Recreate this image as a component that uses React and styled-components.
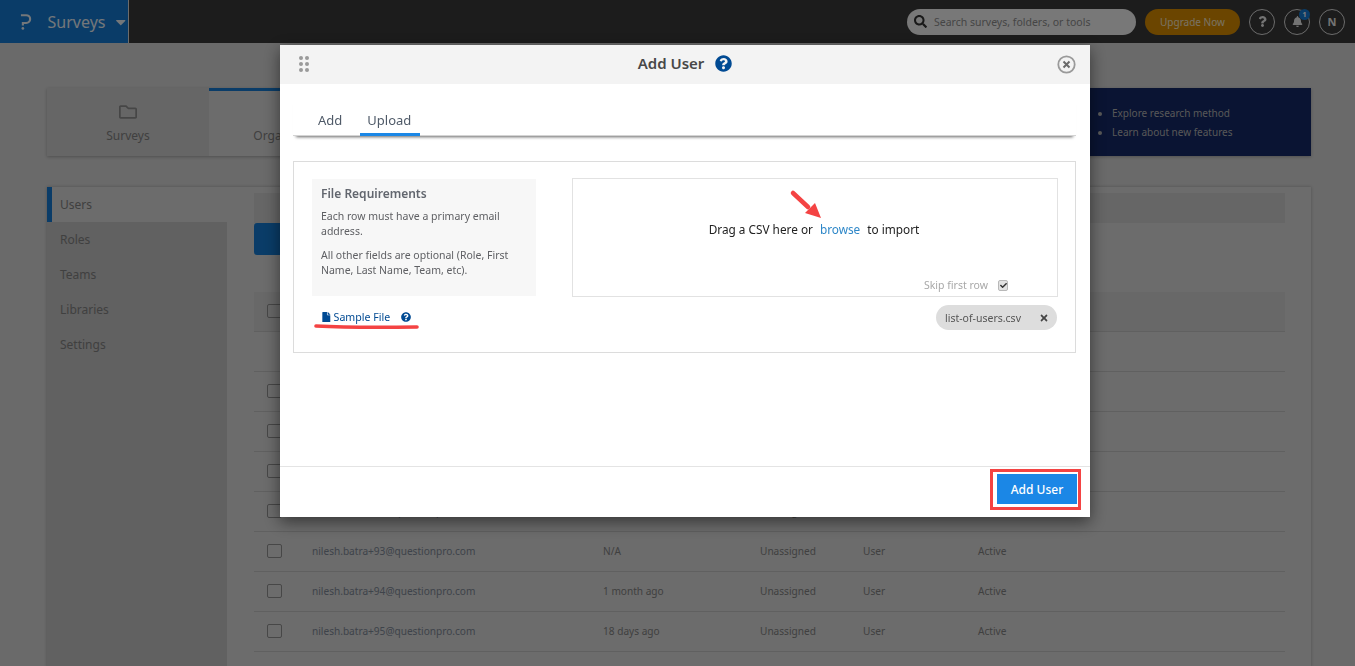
import styled, { createGlobalStyle } from "styled-components";
import {
  FaSearch,
  FaBell,
  FaQuestion,
  FaQuestionCircle,
  FaFile,
  FaTimes,
  FaCheck,
  FaRegFolder,
  FaCaretDown,
  FaUsers,
} from "react-icons/fa";

const GlobalStyle = createGlobalStyle`
  html, body {
    margin: 0;
    height: 100%;
    overflow: hidden;
    background: #d4d4d4;
    font-family: "Noto Sans", "Open Sans", sans-serif;
  }
  * { box-sizing: border-box; }
`;

const Page = styled.div`
  height: 666px;
  overflow: hidden;
`;

const Header = styled.header`
  height: 43px;
  background: #383838;
  display: flex;
  align-items: center;
  padding-right: 10px;
`;

const Brand = styled.div`
  width: 129px;
  height: 43px;
  background: #1479d0;
  border-right: 1px solid #d8d8d8;
  display: flex;
  align-items: center;
  padding-left: 19px;
  gap: 15px;
  color: #e8eef4;
  font-size: 16px;
  margin-right: auto;
  svg.caret {
    margin-left: -8px;
    font-size: 16px;
  }
`;

const Search = styled.div`
  width: 229px;
  height: 26px;
  border-radius: 13px;
  background: #f0f0f0;
  display: flex;
  align-items: center;
  gap: 7px;
  padding-left: 7px;
  font-size: 10.5px;
  color: #8b8b8b;
  margin-right: 9px;
  svg {
    color: #333;
    font-size: 13px;
  }
`;

const Upgrade = styled.div`
  width: 95px;
  height: 26px;
  border-radius: 13px;
  background: #d68a00;
  color: #f4e6c8;
  font-size: 10px;
  display: flex;
  align-items: center;
  justify-content: center;
`;

const RoundIcon = styled.div`
  position: relative;
  width: 26px;
  height: 26px;
  border-radius: 50%;
  border: 1px solid #d8d8d8;
  color: #e6e6e6;
  font-size: 11px;
  font-weight: 700;
  display: flex;
  align-items: center;
  justify-content: center;
  margin-left: 9px;
`;

const Badge = styled.span`
  position: absolute;
  top: -1px;
  right: -1px;
  width: 11px;
  height: 11px;
  border-radius: 50%;
  background: #1479d0;
  color: #fff;
  font-size: 7px;
  line-height: 11px;
  text-align: center;
`;

const Content = styled.main`
  padding: 45px 44px 0 47px;
`;

const TopRow = styled.div`
  display: flex;
  height: 68px;
  box-shadow: 0 1px 3px rgba(0, 0, 0, 0.25);
  margin-bottom: 31px;
`;

const TopTab = styled.div`
  width: 162px;
  background: ${(p) => (p.$active ? "#d8d8d8" : "#cccccc")};
  border-top: 3px solid ${(p) => (p.$active ? "#1479d0" : "transparent")};
  display: flex;
  flex-direction: column;
  align-items: center;
  padding-top: 12px;
  gap: 6px;
  color: #808080;
  font-size: 12px;
  svg {
    font-size: 18px;
    color: #8c8c8c;
  }
`;

const Promo = styled.div`
  margin-left: auto;
  width: 700px;
  background: #142866;
  padding: 18px 0 0 487px;
  color: #b0b0b0;
  font-size: 10px;
  ul {
    margin: 0;
    padding: 0 0 0 14px;
  }
  li {
    margin-bottom: 5px;
    white-space: nowrap;
  }
`;

const MainCard = styled.section`
  background: #d8d8d8;
  display: flex;
  height: 480px;
  box-shadow: 0 0 3px rgba(0, 0, 0, 0.25);
`;

const Sidebar = styled.nav`
  width: 180px;
  flex: none;
  background: #c2c2c2;
`;

const SideItem = styled.div`
  height: 35px;
  line-height: 35px;
  padding-left: ${(p) => (p.$active ? 8 : 13)}px;
  font-size: 12px;
  color: #808080;
  background: ${(p) => (p.$active ? "#d8d8d8" : "transparent")};
  border-left: ${(p) => (p.$active ? "5px solid #1479d0" : "none")};
`;

const MainArea = styled.div`
  flex: 1;
  padding: 6px 26px 0 27px;
`;

const SearchStrip = styled.div`
  height: 30px;
  background: #cccccc;
`;

const NewButton = styled.div`
  width: 120px;
  height: 32px;
  background: #1479d0;
  border-radius: 3px;
  margin-bottom: 37px;
`;

const Row = styled.div`
  height: 40px;
  display: grid;
  grid-template-columns: 45px 291px 157px 103px 115px 1fr;
  align-items: center;
  padding: 0 0 1px 13px;
  border-bottom: 1px solid #c0c0c0;
  background: ${(p) => (p.$head ? "#d0d0d0" : "transparent")};
  font-size: 10.1px;
  color: #808080;
`;

const Box = styled.span`
  width: 15px;
  height: 14px;
  border: 1px solid #8e8e8e;
  border-radius: 2px;
`;

const Email = styled.span`
  color: #7c8694;
`;

const Overlay = styled.div`
  position: fixed;
  inset: 0;
  background: rgba(0, 0, 0, 0.5);
`;

const Modal = styled.div`
  width: 810px;
  height: 472px;
  margin: 45px 0 0 280px;
  background: #fff;
  display: flex;
  flex-direction: column;
  box-shadow: 0 5px 15px rgba(0, 0, 0, 0.5);
`;

const ModalHeader = styled.div`
  position: relative;
  height: 39px;
  flex: none;
  background: #f3f3f3;
  display: flex;
  align-items: center;
  justify-content: center;
  gap: 11px;
  padding-bottom: 3px;
  font-size: 15px;
  font-weight: 600;
  color: #484848;
  svg.help {
    color: #004a93;
    font-size: 17px;
  }
`;

const Grip = styled.svg`
  position: absolute;
  left: 19px;
  top: 11px;
`;

const CloseIcon = styled.svg`
  position: absolute;
  right: 14px;
  top: 10px;
`;

const Tabs = styled.div`
  margin: 15px 14px 0 13px;
  height: 37px;
  display: flex;
  padding-left: 17px;
  border-bottom: 1px solid #d4d4d4;
  box-shadow: 0 4px 3px -3px rgba(0, 0, 0, 0.6);
`;

const TabItem = styled.div`
  padding: ${(p) => (p.$active ? "12px 9px 0 7px" : "12px 8px 0")};
  margin-right: ${(p) => (p.$active ? 0 : 10)}px;
  height: 37px;
  font-size: 13px;
  color: #4f5a68;
  border-bottom: 3px solid ${(p) => (p.$active ? "#1b87e6" : "transparent")};
`;

const FileBox = styled.div`
  margin: 25px 14px 0 13px;
  height: 192px;
  border: 1px solid #dcdcdc;
  padding: 16px 18px 0;
  display: grid;
  grid-template-columns: 224px 486px;
  column-gap: 36px;
`;

const LeftCol = styled.div`
  padding-top: 1px;
`;

const Requirements = styled.div`
  height: 117px;
  background: #f7f7f7;
  padding: 7px 9px;
  font-size: 10.5px;
  line-height: 15px;
  color: #5f6064;
  h4 {
    margin: 0 0 8px;
    font-size: 12px;
    line-height: 15px;
    font-weight: 600;
    color: #62666e;
  }
  p {
    margin: 0 0 9px;
  }
`;

const SampleLink = styled.div`
  position: relative;
  margin: 13px 0 0 9px;
  height: 16px;
  display: flex;
  align-items: center;
  font-size: 10.6px;
  color: #004a93;
  gap: 2px;
  svg.help {
    margin-left: 9px;
    font-size: 10px;
  }
`;

const Underline = styled.svg`
  position: absolute;
  left: -7px;
  top: 11px;
`;

const RightCol = styled.div`
  display: flex;
  flex-direction: column;
  align-items: flex-end;
`;

const DropZone = styled.div`
  position: relative;
  width: 100%;
  height: 119px;
  border: 1px solid #e2e2e2;
  padding: 42px 2px 0 0;
  text-align: center;
  font-size: 11.8px;
  line-height: 17px;
  color: #222;
  a {
    color: #2e87c8;
    margin: 0 7px 0 7px;
  }
`;

const Arrow = styled.svg`
  position: absolute;
  left: 216px;
  top: 10px;
`;

const SkipRow = styled.div`
  position: absolute;
  right: 49px;
  bottom: 2px;
  display: flex;
  align-items: center;
  gap: 10px;
  font-size: 10.5px;
  color: #a8a8a8;
`;

const MiniCheck = styled.span`
  width: 10px;
  height: 11px;
  background: #e2e2e2;
  border: 1px solid #b8b8b8;
  border-radius: 2px;
  display: flex;
  align-items: center;
  justify-content: center;
  color: #333;
  font-size: 7px;
`;

const Chip = styled.div`
  margin: 8px 1px 0 0;
  width: 121px;
  height: 25px;
  border-radius: 13px;
  background: #dddddd;
  display: flex;
  align-items: center;
  justify-content: space-between;
  padding: 0 8px 0 9px;
  font-size: 10.5px;
  color: #555;
  svg {
    font-size: 10px;
    color: #444;
  }
`;

const Footer = styled.div`
  position: relative;
  margin-top: auto;
  height: 51px;
  border-top: 1px solid #e4e4e4;
  display: flex;
  justify-content: flex-end;
  align-items: flex-start;
  padding: 7px 13px 0 0;
`;

const AddButton = styled.button`
  width: 80px;
  height: 30px;
  border: none;
  background: #1b87e6;
  color: #fff;
  font-family: inherit;
  font-size: 12px;
  font-weight: 500;
`;

const Highlight = styled.div`
  position: absolute;
  right: 9px;
  top: 2px;
  width: 91px;
  height: 41px;
  border: 3px solid #f44343;
`;

const rows = [
  ["nilesh.batra+89@questionpro.com", "N/A"],
  ["nilesh.batra+90@questionpro.com", "N/A"],
  ["nilesh.batra+91@questionpro.com", "N/A"],
  ["nilesh.batra+92@questionpro.com", "N/A"],
  ["nilesh.batra+93@questionpro.com", "N/A"],
  ["nilesh.batra+94@questionpro.com", "1 month ago"],
  ["nilesh.batra+95@questionpro.com", "18 days ago"],
];

export default function App() {
  return (
    <Page>
      <GlobalStyle />
      <Header>
        <Brand>
          <svg width="14" height="18" viewBox="0 0 14 18" fill="none">
            <path d="M2 2h5.5a4 4 0 0 1 0 8H4v2.5" stroke="#e8eef4" strokeWidth="2.2" />
            <circle cx="4" cy="15.6" r="1.4" fill="#e8eef4" />
          </svg>
          <span>Surveys</span>
          <FaCaretDown className="caret" />
        </Brand>
        <Search>
          <FaSearch />
          Search surveys, folders, or tools
        </Search>
        <Upgrade>Upgrade Now</Upgrade>
        <RoundIcon>
          <FaQuestion />
        </RoundIcon>
        <RoundIcon>
          <FaBell />
          <Badge>1</Badge>
        </RoundIcon>
        <RoundIcon>N</RoundIcon>
      </Header>

      <Content>
        <TopRow>
          <TopTab>
            <FaRegFolder />
            Surveys
          </TopTab>
          <TopTab $active>
            <FaUsers />
            Organization
          </TopTab>
          <Promo>
            <ul>
              <li>Explore research method</li>
              <li>Learn about new features</li>
            </ul>
          </Promo>
        </TopRow>

        <MainCard>
          <Sidebar>
            <SideItem $active>Users</SideItem>
            <SideItem>Roles</SideItem>
            <SideItem>Teams</SideItem>
            <SideItem>Libraries</SideItem>
            <SideItem>Settings</SideItem>
          </Sidebar>
          <MainArea>
            <SearchStrip />
            <NewButton />
            <Row $head>
              <Box />
            </Row>
            <Row />
            {rows.map(([email, login]) => (
              <Row key={email}>
                <Box />
                <Email>{email}</Email>
                <span>{login}</span>
                <span>Unassigned</span>
                <span>User</span>
                <span>Active</span>
              </Row>
            ))}
          </MainArea>
        </MainCard>
      </Content>

      <Overlay>
        <Modal>
          <ModalHeader>
            <Grip width="10" height="16" viewBox="0 0 10 16" fill="#9a9a9a">
              <circle cx="2" cy="2" r="2" />
              <circle cx="8" cy="2" r="2" />
              <circle cx="2" cy="8" r="2" />
              <circle cx="8" cy="8" r="2" />
              <circle cx="2" cy="14" r="2" />
              <circle cx="8" cy="14" r="2" />
            </Grip>
            <span>Add User</span>
            <FaQuestionCircle className="help" />
            <CloseIcon width="19" height="19" viewBox="0 0 19 19" fill="none">
              <circle cx="9.5" cy="9.5" r="8.2" stroke="#9a9a9a" strokeWidth="1.8" />
              <path d="M6.5 6.5l6 6M12.5 6.5l-6 6" stroke="#6a6a6a" strokeWidth="2" />
            </CloseIcon>
          </ModalHeader>

          <Tabs>
            <TabItem>Add</TabItem>
            <TabItem $active>Upload</TabItem>
          </Tabs>

          <FileBox>
            <LeftCol>
              <Requirements>
                <h4>File Requirements</h4>
                <p>Each row must have a primary email address.</p>
                <p>All other fields are optional (Role, First Name, Last Name, Team, etc).</p>
              </Requirements>
              <SampleLink>
                <FaFile />
                Sample File
                <FaQuestionCircle className="help" />
                <Underline width="106" height="10" viewBox="0 0 106 10" fill="none">
                  <path d="M2 6C30 7.5 70 7.5 103 7" stroke="#f44343" strokeWidth="3.6" strokeLinecap="round" />
                </Underline>
              </SampleLink>
            </LeftCol>
            <RightCol>
              <DropZone>
                Drag a CSV here or<a>browse</a>to import
                <Arrow width="34" height="32" viewBox="0 0 34 32" fill="#f44343">
                  <path d="M4 4l15 14" stroke="#f44343" strokeWidth="4.5" strokeLinecap="round" />
                  <path d="M32 29l-16-5 10-10z" />
                </Arrow>
                <SkipRow>
                  Skip first row
                  <MiniCheck>
                    <FaCheck />
                  </MiniCheck>
                </SkipRow>
              </DropZone>
              <Chip>
                list-of-users.csv
                <FaTimes />
              </Chip>
            </RightCol>
          </FileBox>

          <Footer>
            <AddButton>Add User</AddButton>
            <Highlight />
          </Footer>
        </Modal>
      </Overlay>
    </Page>
  );
}
